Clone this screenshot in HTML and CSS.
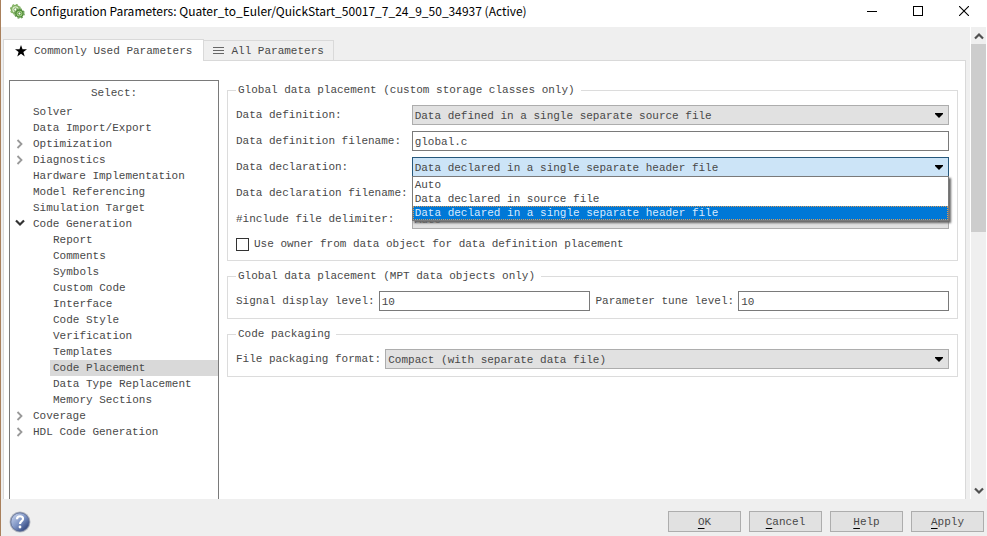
FILE: index.html
```html
<!DOCTYPE html>
<html lang="en">
<head>
    <meta charset="UTF-8">
    <meta name="viewport" content="width=device-width, initial-scale=1">
    <title>Configuration Parameters</title>
    <link rel="stylesheet" href="styles.css">
</head>
<body>
    <svg class="sprite" width="0" height="0">
        <symbol id="chevron" viewBox="0 0 8 10">
            <path d="M1.5 1 L5.5 5 L1.5 9" fill="none" stroke="currentColor" stroke-width="1.8"/>
        </symbol>
        <symbol id="chevron-down" viewBox="0 0 10 8">
            <path d="M1 1.5 L5 5.5 L9 1.5" fill="none" stroke="currentColor" stroke-width="2.2"/>
        </symbol>
        <symbol id="chevron-up" viewBox="0 0 10 8">
            <path d="M1 6.5 L5 2.5 L9 6.5" fill="none" stroke="currentColor" stroke-width="2.2"/>
        </symbol>
    </svg>

    <div class="window">
        <header class="titlebar">
            <svg class="app-icon" width="15" height="15" viewBox="0 0 15 15">
                <circle cx="5.5" cy="5.5" r="4" fill="#d9edc8" stroke="#7fae60" stroke-width="1.6"/>
                <circle cx="5.5" cy="5.5" r="5" fill="none" stroke="#8dba70" stroke-width="1.2" stroke-dasharray="2 1.9"/>
                <circle cx="5.5" cy="5.5" r="1.6" fill="#fff" stroke="#79a85c"/>
                <circle cx="9.5" cy="9.5" r="3.6" fill="#a9d488" stroke="#4f8a38" stroke-width="1.5"/>
                <circle cx="9.5" cy="9.5" r="4.7" fill="none" stroke="#5c9643" stroke-width="1.2" stroke-dasharray="1.9 1.8"/>
                <circle cx="9.5" cy="9.5" r="1.5" fill="#fff" stroke="#4f8a38"/>
            </svg>
            <h1 class="title">Configuration Parameters: Quater_to_Euler/QuickStart_50017_7_24_9_50_34937 (Active)</h1>
            <div class="window-buttons">
                <button type="button" aria-label="Minimize"><svg width="10" height="10"><path d="M0 5.5H10" stroke="#000"/></svg></button>
                <button type="button" aria-label="Maximize"><svg width="10" height="10"><rect x=".5" y=".5" width="9" height="9" fill="none" stroke="#000"/></svg></button>
                <button type="button" aria-label="Close"><svg width="10" height="10"><path d="M0 0L10 10M10 0L0 10" stroke="#000" stroke-width="1.1"/></svg></button>
            </div>
        </header>

        <main class="content">
            <div class="pages">
                <div class="tabs" role="tablist">
                    <button type="button" class="tab active" role="tab" aria-selected="true">
                        <svg width="12" height="12" viewBox="0 0 12 12"><path d="M6 0L7.5 4.3H12L8.4 7L9.7 11.5L6 8.8L2.3 11.5L3.6 7L0 4.3H4.5Z" fill="#000"/></svg>
                        Commonly Used Parameters
                    </button>
                    <button type="button" class="tab" role="tab" aria-selected="false">
                        <svg width="11" height="7"><path d="M0 .5H11M0 3.5H11M0 6.5H11" stroke="#666"/></svg>
                        All Parameters
                    </button>
                </div>

                <div class="panel">
                    <nav class="tree">
                        <h2>Select:</h2>
                        <ul>
                            <li><a href="#">Solver</a></li>
                            <li><a href="#">Data Import/Export</a></li>
                            <li><svg class="closed"><use href="#chevron"/></svg><a href="#">Optimization</a></li>
                            <li><svg class="closed"><use href="#chevron"/></svg><a href="#">Diagnostics</a></li>
                            <li><a href="#">Hardware Implementation</a></li>
                            <li><a href="#">Model Referencing</a></li>
                            <li><a href="#">Simulation Target</a></li>
                            <li><svg class="open"><use href="#chevron-down"/></svg><a href="#">Code Generation</a>
                                <ul>
                                    <li><a href="#">Report</a></li>
                                    <li><a href="#">Comments</a></li>
                                    <li><a href="#">Symbols</a></li>
                                    <li><a href="#">Custom Code</a></li>
                                    <li><a href="#">Interface</a></li>
                                    <li><a href="#">Code Style</a></li>
                                    <li><a href="#">Verification</a></li>
                                    <li><a href="#">Templates</a></li>
                                    <li><a href="#" class="current">Code Placement</a></li>
                                    <li><a href="#">Data Type Replacement</a></li>
                                    <li><a href="#">Memory Sections</a></li>
                                </ul>
                            </li>
                            <li><svg class="closed"><use href="#chevron"/></svg><a href="#">Coverage</a></li>
                            <li><svg class="closed"><use href="#chevron"/></svg><a href="#">HDL Code Generation</a></li>
                        </ul>
                    </nav>

                    <form class="settings" id="settings">
                        <fieldset>
                            <legend>Global data placement (custom storage classes only)</legend>
                            <div class="fields">
                                <label for="data-def">Data definition:</label>
                                <select id="data-def">
                                    <option>Data defined in a single separate source file</option>
                                </select>

                                <label for="def-file">Data definition filename:</label>
                                <input type="text" id="def-file" value="global.c">

                                <label for="data-decl">Data declaration:</label>
                                <div class="combo">
                                    <select id="data-decl" class="opened">
                                        <option>Data declared in a single separate header file</option>
                                    </select>
                                    <ul class="options" role="listbox">
                                        <li role="option">Auto</li>
                                        <li role="option">Data declared in source file</li>
                                        <li role="option" class="selected" aria-selected="true">Data declared in a single separate header file</li>
                                    </ul>
                                </div>

                                <label for="decl-file">Data declaration filename:</label>
                                <input type="text" id="decl-file">

                                <label for="delimiter">#include file delimiter:</label>
                                <select id="delimiter">
                                    <option>Auto</option>
                                </select>
                            </div>
                            <div class="check">
                                <input type="checkbox" id="owner">
                                <label for="owner">Use owner from data object for data definition placement</label>
                            </div>
                        </fieldset>

                        <fieldset>
                            <legend>Global data placement (MPT data objects only)</legend>
                            <div class="pair">
                                <div class="fields">
                                    <label for="signal">Signal display level:</label>
                                    <input type="text" id="signal" value="10">
                                </div>
                                <div class="fields">
                                    <label for="tune">Parameter tune level:</label>
                                    <input type="text" id="tune" value="10">
                                </div>
                            </div>
                        </fieldset>

                        <fieldset>
                            <legend>Code packaging</legend>
                            <div class="fields">
                                <label for="packaging">File packaging format:</label>
                                <select id="packaging">
                                    <option>Compact (with separate data file)</option>
                                </select>
                            </div>
                        </fieldset>
                    </form>
                </div>
            </div>

            <div class="scrollbar">
                <button type="button" aria-label="Scroll up"><svg width="10" height="8"><use href="#chevron-up"/></svg></button>
                <div class="track"><div class="thumb"></div></div>
                <button type="button" aria-label="Scroll down"><svg width="10" height="8"><use href="#chevron-down"/></svg></button>
            </div>
        </main>

        <footer class="footer">
            <button type="button" class="help" aria-label="Help">
                <svg width="22" height="22" viewBox="0 0 22 22">
                    <defs>
                        <linearGradient id="ball" x1="0" y1="0" x2="1" y2="1">
                            <stop offset="0.1" stop-color="#c3d0ea"/>
                            <stop offset="0.5" stop-color="#7d93c4"/>
                            <stop offset="0.9" stop-color="#2c4078"/>
                        </linearGradient>
                    </defs>
                    <circle cx="11" cy="11" r="10.5" fill="#b4b8c2"/>
                    <circle cx="11" cy="11" r="9.2" fill="url(#ball)" stroke="#566690" stroke-width=".8"/>
                    <path d="M8 8.2C8 4.2 14.3 4.4 14 8C13.8 10.3 11 10.2 11 13" fill="none" stroke="#fff" stroke-width="2.2"/>
                    <circle cx="11" cy="16" r="1.4" fill="#fff"/>
                </svg>
            </button>
            <button type="submit" form="settings" class="action"><u>O</u>K</button>
            <button type="button" class="action"><u>C</u>ancel</button>
            <button type="button" class="action"><u>H</u>elp</button>
            <button type="button" class="action"><u>A</u>pply</button>
        </footer>
    </div>
</body>
</html>
```
FILE: styles.css
```css
* {
    box-sizing: border-box;
}
body {
    margin: 0;
    color: #484848;
    background-color: #efefef;
    font: 11px/16px "Liberation Mono", monospace;
}
button, input, select {
    margin: 0;
    padding: 0;
    color: inherit;
    font: inherit;
    border-radius: 0;
}
button {
    border: none;
    background: none;
}
ul {
    margin: 0;
    padding: 0;
    list-style: none;
}
.sprite {
    position: absolute;
}
.window {
    display: flex;
    flex-direction: column;
    height: 100vh;
    border-left: 1px solid #a9805c;
}

/* title bar */
.titlebar {
    display: flex;
    align-items: center;
    height: 27px;
    padding: 0 18px 5px 9px;
    background-color: #fff;
}
.app-icon {
    flex: none;
    margin-right: 5px;
}
.title {
    flex: 1;
    margin: 0;
    color: #000;
    font: 12px/20px "Noto Sans CJK SC", sans-serif;
    white-space: nowrap;
}
.window-buttons {
    display: flex;
    gap: 36px;
}
.window-buttons button, .window-buttons svg {
    display: block;
}

/* main area */
.content {
    display: flex;
    flex: 1;
    min-height: 0;
}
.pages {
    display: flex;
    flex: 1;
    flex-direction: column;
    min-width: 0;
    padding: 12px 4px 0 2px;
}
.tabs {
    display: flex;
    align-items: flex-end;
}
.tab {
    display: flex;
    align-items: center;
    gap: 7px;
    height: 20px;
    padding: 0 9px;
    border: 1px solid #d9d9d9;
    border-width: 1px 1px 0 0;
}
.tab.active {
    z-index: 1;
    height: 22px;
    margin-bottom: -1px;
    padding: 0 11px;
    border-left-width: 1px;
    background-color: #fff;
}
.panel {
    display: flex;
    flex: 1;
    gap: 8px;
    min-height: 0;
    padding: 19px 7px 0 5px;
    border: 1px solid #d9d9d9;
    border-bottom: none;
    background-color: #fff;
}
.tree {
    flex: none;
    width: 210px;
    overflow: hidden;
    border: 1px solid #7a7a7a;
    border-bottom: none;
}
.tree h2 {
    margin: 0;
    padding: 4px 0 3px;
    font: inherit;
    text-align: center;
}
.tree li {
    position: relative;
    padding-left: 20px;
}
.tree a {
    display: block;
    height: 16px;
    padding-left: 3px;
    color: inherit;
    text-decoration: none;
}
.tree a.current {
    background-color: #d9d9d9;
}
.tree svg {
    position: absolute;
    top: 3px;
    left: 6px;
    width: 8px;
    height: 10px;
    color: #999;
}
.tree svg.open {
    left: 5px;
    width: 10px;
    height: 8px;
    color: #333;
}

/* settings form */
.settings {
    display: flex;
    flex: 1;
    flex-direction: column;
    gap: 8px;
    min-width: 0;
    padding-top: 3px;
}
fieldset {
    min-width: 0;
    margin: 0;
    padding: 8px 8px 7px;
    border: 1px solid #dcdcdc;
}
legend {
    padding: 0 6px 0 2px;
    line-height: 14px;
}
.fields {
    display: grid;
    flex: 1;
    grid-template-columns: max-content 1fr;
    gap: 6px 4px;
    align-items: center;
}
.pair {
    display: flex;
    gap: 6px;
}
.fields input, .fields select {
    display: block;
    width: 100%;
    min-width: 0;
    height: 20px;
    padding: 1px 2px 0;
    border: 1px solid #7a7a7a;
    background-color: #fff;
}
.fields select {
    appearance: none;
    border-color: #adadad;
    background: #e1e1e1 url("data:image/svg+xml,%3Csvg xmlns='http://www.w3.org/2000/svg' width='8' height='5'%3E%3Cpath d='M0 0H8V1L4 5L0 1Z'/%3E%3C/svg%3E") no-repeat right 5px center;
}
.fields select.opened {
    border-color: #26587c;
    background-color: #cce4f7;
}
.combo {
    position: relative;
}
.options {
    position: absolute;
    z-index: 2;
    top: 19px;
    right: 0;
    left: 0;
    padding-top: 1px;
    border: 1px solid #7a7a7a;
    background-color: #fff;
    box-shadow: 2px 2px 2px #666;
    line-height: 14px;
}
.options li {
    height: 14px;
    padding-left: 2px;
}
.options .selected {
    color: #d5eaff;
    background-color: #0078d7;
    outline: 1px dotted #d89a58;
    outline-offset: -1px;
}
.check {
    display: flex;
    align-items: center;
    gap: 5px;
    height: 18px;
    margin-top: 6px;
}
.check input {
    appearance: none;
    width: 13px;
    height: 13px;
    border: 1px solid #333;
    background-color: #fff;
}

/* scroll bar */
.scrollbar {
    display: flex;
    flex: none;
    flex-direction: column;
    width: 17px;
    border: 1px solid #fff;
    border-width: 0 1px;
}
.scrollbar button {
    display: flex;
    align-items: center;
    justify-content: center;
    height: 17px;
    color: #505050;
}
.track {
    flex: 1;
}
.thumb {
    height: 43%;
    background-color: #cdcdcd;
}

/* footer */
.footer {
    display: flex;
    align-items: center;
    gap: 8px;
    height: 37px;
    padding: 8px 3px 0 8px;
}
.help {
    margin-right: auto;
}
.help svg {
    display: block;
}
.action {
    width: 73px;
    height: 21px;
    border: 1px solid #adadad;
    background-color: #e1e1e1;
}
.action u {
    text-decoration-color: #000;
    text-underline-offset: 3px;
}
```
